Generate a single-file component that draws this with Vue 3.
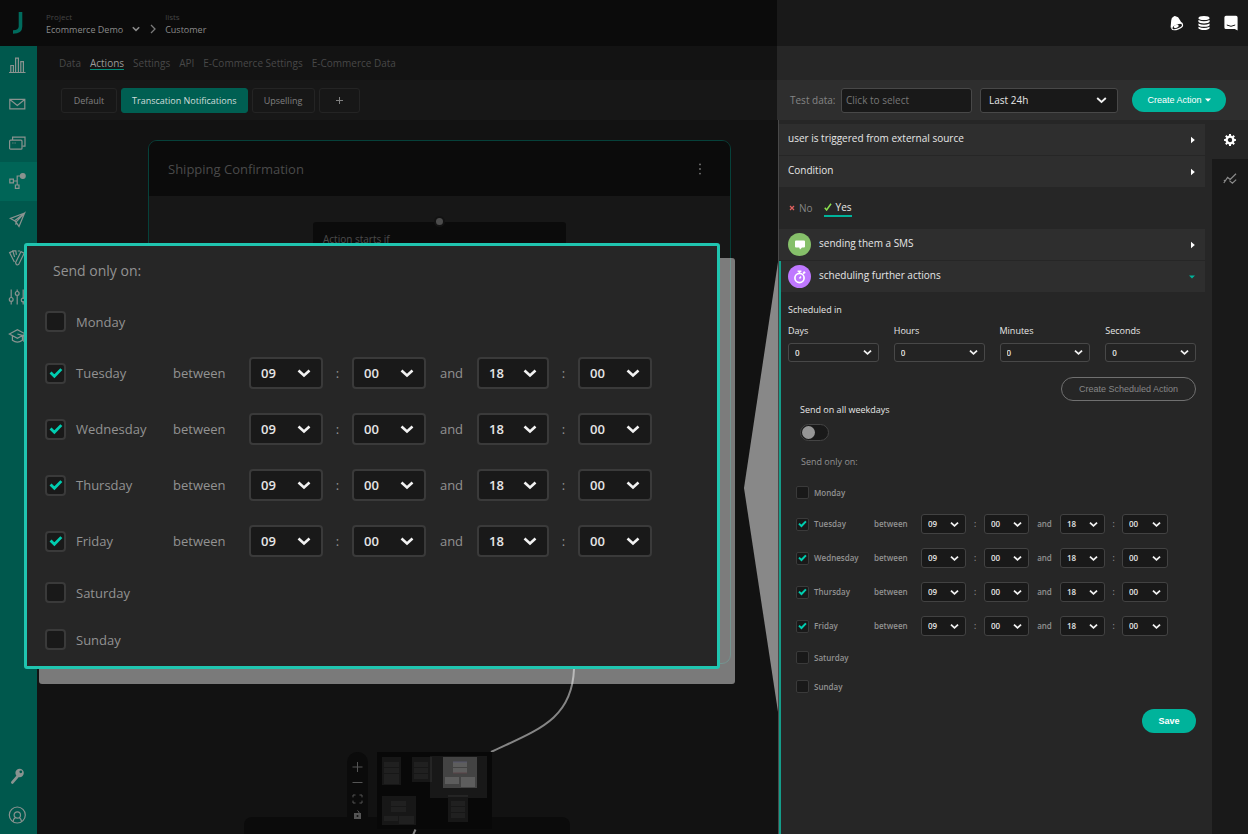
<script setup>
import { reactive, ref } from 'vue'

const navItems = ['stats', 'mail', 'windows', 'flow', 'send', 'swatches', 'sliders', 'learn']
const tabs = ['Data', 'Actions', 'Settings', 'API', 'E-Commerce Settings', 'E-Commerce Data']
const delays = ['Days', 'Hours', 'Minutes', 'Seconds']
const days = reactive([
  { name: 'Monday', on: false },
  { name: 'Tuesday', on: true },
  { name: 'Wednesday', on: true },
  { name: 'Thursday', on: true },
  { name: 'Friday', on: true },
  { name: 'Saturday', on: false },
  { name: 'Sunday', on: false },
])
const slots = [
  { value: '09', after: ':', label: 'from hour' },
  { value: '00', after: 'and', label: 'from minute' },
  { value: '18', after: ':', label: 'to hour' },
  { value: '00', after: '', label: 'to minute' },
]
const allWeekdays = ref(false)
</script>

<template>
  <div class="app">
    <div class="workspace">
      <header class="topbar">
        <a href="#" class="logo" aria-label="Home">
          <svg width="10" height="22" viewBox="0 0 10 22"><path d="M7.5 0v14.5q0 5.5-7.5 5.5" fill="none" stroke="#006b5d" stroke-width="3.6" /></svg>
        </a>
        <div class="crumb">
          <span class="crumb-kind">Project</span>
          <button type="button" class="crumb-name">
            Ecommerce Demo
            <svg width="8" height="6" viewBox="0 0 8 6"><path d="M.8 1.2 4 4.4l3.2-3.2" fill="none" stroke="#8a8a8a" stroke-width="1.6" /></svg>
          </button>
        </div>
        <svg class="crumb-sep" width="6" height="10" viewBox="0 0 6 10"><path d="M1 1l4 4-4 4" fill="none" stroke="#7a7a7a" stroke-width="1.3" /></svg>
        <div class="crumb">
          <span class="crumb-kind">lists</span>
          <a href="#" class="crumb-name">Customer</a>
        </div>
      </header>

      <div class="below">
        <nav class="sidebar">
          <div class="side-main">
            <a v-for="item in navItems" :key="item" href="#" :aria-label="item" :class="['side-link', { current: item === 'flow' }]">
              <svg width="18" height="18" viewBox="0 0 18 18" fill="none" stroke="#8a9390" stroke-width="1.2">
                <template v-if="item === 'stats'"><path d="M1 16.500h16.500M2.800 16V9.500h2.600V16M7.600 16V2.200h2.800V16M12.800 16V5.600h2.600V16" /></template>
                <template v-else-if="item === 'mail'"><path d="M1.800 4.400h15v9.400h-15zM2.200 4.800l7.100 5.600 7.100-5.600" /></template>
                <template v-else-if="item === 'windows'"><rect x="1.600" y="6.200" width="12.400" height="9" rx="1" /><path d="M4.600 6V3.200h12.400v9h-2.600M4.400 9h1M6.600 9h1" /></template>
                <template v-else-if="item === 'flow'"><path d="M1.800 7.200h3.600v3.600H1.800zM7.400 13H11v3.400H7.400zM5.600 9h3.600v4M9.200 9V4h4" /><circle cx="14.800" cy="4" r="2.400" fill="#8a9390" /></template>
                <template v-else-if="item === 'send'"><path d="M16.600 2 2.400 7.400l4.200 2.400L16.600 2 11 15.400 8 11l8.600-9M6.600 9.800 8 11l-.2 2.800" /></template>
                <template v-else-if="item === 'swatches'"><path d="M4.600 2.200 1.600 3.600 6.400 13M6.600 8 4.800 1.800h3l.6 4M7.600 13.600 13 2.600l3.200 1.600-5.400 11q-2.600 1.800-3.200-1.600zM9.800 2h2.200" /></template>
                <template v-else-if="item === 'sliders'"><path d="M3.200 1.400v8M3.200 13.600v3M9.200 1.400v2M9.200 7.400v9.200M15.200 1.400v8.800M15.200 14v2.600" /><circle cx="3.200" cy="11.400" r="1.900" /><circle cx="9.200" cy="5.400" r="1.900" /><circle cx="15.200" cy="12" r="1.900" /></template>
                <template v-else><path d="M1.400 7 9.400 2.800 17.400 7l-8 4.200zM4.400 8.800v4.400q5 3.800 10 0V8.800M9.400 7l6.400 1.800v6" /></template>
              </svg>
            </a>
          </div>
          <a href="#" class="side-link extra" aria-label="Access keys">
            <svg width="18" height="18" viewBox="0 0 18 18"><path d="M4.400 15.400 9.400 9.600" stroke="#8a9390" stroke-width="2.800" stroke-linecap="round" /><circle cx="11.600" cy="6" r="4.200" fill="#8a9390" /><circle cx="12.800" cy="4.800" r="1.400" fill="#00584d" /></svg>
          </a>
          <a href="#" class="side-link extra" aria-label="Account">
            <svg width="18" height="18" viewBox="0 0 18 18" fill="none" stroke="#8a9390" stroke-width="1.200"><circle cx="9.300" cy="9" r="8" /><circle cx="9.300" cy="9" r="3.200" /><path d="M5 15.600q.4-3 2.400-4.200M13.600 15.600q-.4-3-2.400-4.200" /></svg>
          </a>
        </nav>

        <main class="main">
          <nav class="tabs">
            <a v-for="tab in tabs" :key="tab" href="#" :class="['tab', { current: tab === 'Actions' }]">{{ tab }}</a>
          </nav>
          <div class="flows">
            <button type="button" class="flow w-default">Default</button>
            <button type="button" class="flow current">Transcation Notifications</button>
            <button type="button" class="flow w-upsell">Upselling</button>
            <button type="button" class="flow w-add" aria-label="Add">
              <svg width="7" height="7" viewBox="0 0 7 7"><path d="M3.500 0v7M0 3.500h7" stroke="#808080" /></svg>
            </button>
          </div>

          <div class="canvas">
            <section class="group">
              <header class="group-head">
                <h2>Shipping Confirmation</h2>
                <button type="button" class="dots" aria-label="More">
                  <svg width="4" height="12" viewBox="0 0 4 12" fill="#777"><circle cx="2" cy="1.400" r=".9" /><circle cx="2" cy="6" r=".9" /><circle cx="2" cy="10.600" r=".9" /></svg>
                </button>
              </header>
              <div class="node"><span class="handle"></span>Action starts if</div>
            </section>
            <svg class="edge" width="90" height="104" viewBox="0 0 90 104" fill="none" stroke="#858585" stroke-width="2"><path d="M87 0v21C85 72 50 82 4 104" /></svg>
            <div class="next-group"></div>
            <div class="controls">
              <button type="button" aria-label="Zoom in"><svg width="11" height="12" viewBox="0 0 11 12"><path d="M5.500 1v10M.5 6h10" stroke="#555" /></svg></button>
              <button type="button" aria-label="Zoom out"><svg width="11" height="12" viewBox="0 0 11 12"><path d="M.5 5.500h10" stroke="#555" /></svg></button>
              <button type="button" aria-label="Fit view"><svg width="11" height="12" viewBox="0 0 11 12"><path d="M3.500 2H1v2.400M7.500 2H10v2.400M3.500 10H1V7.600M7.500 10H10V7.600" stroke="#555" fill="none" /></svg></button>
              <button type="button" aria-label="Lock"><svg width="11" height="12" viewBox="0 0 11 12"><rect x="2" y="4" width="7" height="6" fill="#555" /><path d="M7 4.400V3L5.500 1.400" stroke="#555" fill="none" /><circle cx="5.500" cy="7" r="1" fill="#111" /></svg></button>
            </div>
            <svg class="minimap" width="115" height="82" viewBox="0 0 115 82">
              <rect width="115" height="77" fill="#080808" />
              <rect x="53" y="4" width="57" height="42" fill="#181818" />
              <g fill="#171717"><path d="M5 5h19v28H5zM35 5h19v25H35zM5 44h34v29H5zM71 44h20v26H71z" /></g>
              <path d="M54 5v25M71 44h20" stroke="#333" />
              <g fill="#202020"><path d="M7 10h15v5H7zM7 16h15v5H7zM7 22h15v10H7zM37 10h14v5H37zM37 16h14v5H37zM37 22h14v5H37zM14 49h15v5H14zM14 55h15v5H14zM7 64h14v5H7zM22 64h15v8H22zM74 49h14v5H74zM74 55h14v5H74zM74 61h14v5H74z" /></g>
              <path d="M66 5h34v31H66z" fill="#434343" />
              <path d="M76 10h14v5H76zM76 16h14v5H76zM68 25h14v7H68zM84 25h14v10H84z" fill="#5d5d5d" />
              <path d="M76 10h14" stroke="#56566c" /><path d="M76 21h14" stroke="#5a4448" />
              <path d="M38.500 77.500 36 83" stroke="#858585" stroke-width="2" />
            </svg>
          </div>
        </main>
      </div>

      <svg class="pointer" width="34" height="450" viewBox="0 0 34 450"><path d="M34 0v450L0 226z" fill="#888" /></svg>

      <section class="callout">
        <p class="days-title">Send only on:</p>
        <div v-for="day in days" :key="day.name" :class="['day', { on: day.on }]">
          <label class="day-label">
            <span class="tick"><input v-model="day.on" type="checkbox"><svg viewBox="0 0 12 10"><path d="M1.300 4.800 4.600 8l6-6.200" fill="none" stroke="#00cdb0" stroke-width="2.400" /></svg></span>
            {{ day.name }}
          </label>
          <template v-if="day.on">
            <span class="between">between</span>
            <template v-for="(slot, i) in slots" :key="i">
              <span class="pick">
                <select :aria-label="day.name + ' ' + slot.label"><option>{{ slot.value }}</option></select>
                <svg viewBox="0 0 14 10"><path d="M1.500 2.500 7 7.500l5.500-5" fill="none" stroke="#f2f2f2" stroke-width="2.600" /></svg>
              </span>
              <span v-if="slot.after" class="joint">{{ slot.after }}</span>
            </template>
          </template>
        </div>
      </section>
    </div>

    <aside class="side">
      <div class="side-top">
        <button type="button" aria-label="Notifications"><svg width="14" height="16" viewBox="0 0 14 16"><path d="M.6 12.400 1.200 5.400Q1.400 2.600 3.400 1.800q1-1.400 2.200-.6 3 .4 4 3.200Q10.600 7 13 8.200L7 13z" fill="#fff" /><ellipse cx="7.200" cy="11.600" rx="5.600" ry="2.500" transform="rotate(-22 7.200 11.600)" fill="#191919" stroke="#fff" stroke-width="1.200" /><ellipse cx="6.200" cy="11.400" rx="2.600" ry="1.500" transform="rotate(-22 6.200 11.400)" fill="#fff" /></svg></button>
        <button type="button" aria-label="Database"><svg width="12" height="16" viewBox="0 0 12 16" fill="#fff"><path d="M.4 3.200Q.6 1 6 1t5.600 2.200Q11.400 5 6 5T.4 3.200zM.4 5q5.600 2.600 11.200 0v1.800Q10.400 8.400 6 8.400T.4 6.800zM.4 8.400q5.600 2.600 11.200 0v1.800q-1.200 1.600-5.600 1.600T.4 10.200zM.4 11.800q5.600 2.600 11.200 0v1.400Q10.400 15 6 15T.4 13.200z" /></svg></button>
        <button type="button" aria-label="Messages"><svg width="14" height="16" viewBox="0 0 14 16"><path d="M2 .8h10q1.600 0 1.600 1.600v13L10.800 14H2Q.4 14 .4 12.400v-10Q.4.800 2 .8z" fill="#fff" /><path d="M2.800 10q4.200 2.600 8.400 0" fill="none" stroke="#191919" /></svg></button>
      </div>
      <div class="side-strip"></div>
      <div class="side-tools">
        <label for="test">Test data:</label>
        <input id="test" type="text" placeholder="Click to select">
        <span class="pick range">
          <select aria-label="Time range"><option>Last 24h</option></select>
          <svg viewBox="0 0 14 10"><path d="M1.500 2.500 7 7.500l5.500-5" fill="none" stroke="#f2f2f2" stroke-width="2.400" /></svg>
        </span>
        <button type="button" class="pill create">Create Action <svg width="6" height="4" viewBox="0 0 6 4"><path d="M0 .5h6L3 3.800z" fill="#fff" /></svg></button>
      </div>

      <div class="side-body">
        <div class="steps">
          <div class="heads first">
            <button type="button" class="head"><span class="head-text">user is triggered from external source</span><svg width="4" height="8" viewBox="0 0 4 8"><path d="M0 .8 3.800 4 0 7.200z" fill="#fff" /></svg></button>
            <button type="button" class="head"><span class="head-text">Condition</span><svg width="4" height="8" viewBox="0 0 4 8"><path d="M0 .8 3.800 4 0 7.200z" fill="#fff" /></svg></button>
          </div>
          <div class="branch">
            <button type="button" class="no"><svg width="6" height="6" viewBox="0 0 6 6"><path d="M1 1l4 4M5 1 1 5" stroke="#e0605e" stroke-width="1.300" /></svg>No</button>
            <button type="button" class="yes"><svg width="8" height="8" viewBox="0 0 8 8"><path d="M.8 4.800 2.600 7 7 .8" fill="none" stroke="#8be04e" stroke-width="1.500" /></svg>Yes</button>
          </div>
          <div class="heads">
            <button type="button" class="head">
              <span class="badge green"><svg width="12" height="10" viewBox="0 0 12 10"><path d="M2 .5h8q1 0 1 1v5q0 1-1 1H8L6 9.600l-.8-2.100H2q-1 0-1-1v-5q0-1 1-1z" fill="#fff" /></svg></span>
              <span class="head-text">sending them a SMS</span><svg width="4" height="8" viewBox="0 0 4 8"><path d="M0 .8 3.800 4 0 7.200z" fill="#fff" /></svg>
            </button>
          </div>
          <section class="schedule">
            <button type="button" class="head">
              <span class="badge purple"><svg width="13" height="14" viewBox="0 0 13 14" fill="none" stroke="#fff"><circle cx="6.500" cy="8" r="4.600" stroke-width="1.700" /><path d="M4.600 1.200h3.800M6.500 1.200v2.400M10 3.600l1.400-1.400M10.600 1.600l1.600 1.600M6.500 8.400 8 6.600" stroke-width="1.500" /></svg></span>
              <span class="head-text">scheduling further actions</span><svg width="6" height="4" viewBox="0 0 6 4"><path d="M0 .4h6L3 3.600z" fill="#00b39b" /></svg>
            </button>
            <div class="form">
              <h3>Scheduled in</h3>
              <div class="delays">
                <label v-for="delay in delays" :key="delay">
                  {{ delay }}
                  <span class="pick">
                    <select><option>0</option></select>
                    <svg viewBox="0 0 14 10"><path d="M1.500 2.500 7 7.500l5.500-5" fill="none" stroke="#f2f2f2" stroke-width="2.800" /></svg>
                  </span>
                </label>
              </div>
              <button type="button" class="pill outline">Create Scheduled Action</button>
              <label class="weekdays">
                Send on all weekdays
                <input v-model="allWeekdays" type="checkbox" role="switch" class="toggle">
              </label>
              <div class="small-days">
                <p class="days-title">Send only on:</p>
                <div v-for="day in days" :key="day.name" :class="['day', { on: day.on }]">
                  <label class="day-label">
                    <span class="tick"><input v-model="day.on" type="checkbox"><svg viewBox="0 0 12 10"><path d="M1.300 4.800 4.600 8l6-6.200" fill="none" stroke="#00cdb0" stroke-width="2.600" /></svg></span>
                    {{ day.name }}
                  </label>
                  <template v-if="day.on">
                    <span class="between">between</span>
                    <template v-for="(slot, i) in slots" :key="i">
                      <span class="pick">
                        <select :aria-label="day.name + ' ' + slot.label"><option>{{ slot.value }}</option></select>
                        <svg viewBox="0 0 14 10"><path d="M1.500 2.500 7 7.500l5.500-5" fill="none" stroke="#f2f2f2" stroke-width="2.800" /></svg>
                      </span>
                      <span v-if="slot.after" class="joint">{{ slot.after }}</span>
                    </template>
                  </template>
                </div>
              </div>
              <button type="button" class="pill save">Save</button>
            </div>
          </section>
        </div>
        <nav class="rail">
          <a href="#" class="rail-link current" aria-label="Settings"><svg width="12" height="12" viewBox="0 0 12 12"><circle cx="6" cy="6" r="3.400" fill="none" stroke="#fff" stroke-width="2.400" /><path d="M6 .1v2M6 9.900v2M.1 6h2M9.900 6h2M1.800 1.800l1.400 1.400M8.800 8.800l1.400 1.400M1.800 10.200l1.400-1.400M8.800 3.200l1.400-1.400" stroke="#fff" stroke-width="2" /></svg></a>
          <a href="#" class="rail-link" aria-label="Analytics"><svg width="14" height="12" viewBox="0 0 14 12" fill="none" stroke="#8c8c8c" stroke-width="1.200"><path d="M.8 10 4.600 4.400l2.600 2L13 .8M.8 7.200l2 .6M6.400 7.600l3 2.600 3.800-3.600" /></svg></a>
        </nav>
      </div>
    </aside>
  </div>
</template>

<style>
body {
  margin: 0;
  background: #121212;
}
</style>

<style scoped>
.app {
  display: grid;
  grid-template-columns: 777fr minmax(440px, 471fr);
  min-height: 100vh;
  font: 500 10px/14px "Open Sans", "Noto Sans", sans-serif;
  color: #e6e6e6;
}
.app *,
.app *::before {
  box-sizing: border-box;
}
a {
  color: inherit;
  text-decoration: none;
}
button {
  margin: 0;
  padding: 0;
  border: 0;
  background: none;
  color: inherit;
  font: inherit;
}
h2, h3, p {
  margin: 0;
  font: inherit;
}
svg {
  display: block;
  flex: none;
}

/* Workspace */
.workspace {
  position: relative;
  display: flex;
  flex-direction: column;
  min-width: 0;
  background: #121212;
}
.topbar {
  display: flex;
  height: 46px;
  padding-top: 11px;
  background: #0b0b0b;
}
.logo {
  width: 46px;
  padding: 1px 0 0 13px;
}
.crumb {
  display: flex;
  flex-direction: column;
  font-size: 9px;
  line-height: 13px;
}
.crumb-kind {
  font-size: 8px;
  line-height: 11px;
  color: #444;
}
.crumb-name {
  display: flex;
  align-items: center;
  gap: 9px;
  height: 14px;
  color: #8a8a8a;
}
.crumb-sep {
  margin: 13px 9px 0 10px;
}
.below {
  display: flex;
  flex: 1;
}
.sidebar {
  display: flex;
  flex-direction: column;
  width: 37px;
  background: #00584d;
}
.side-main {
  display: grid;
  grid-auto-rows: 1fr;
  height: 309px;
  margin-bottom: auto;
}
.side-link {
  display: grid;
  place-items: center;
  padding-right: 3px;
}
.side-link.current {
  background: #006557;
}
.extra {
  height: 39px;
}
.main {
  display: flex;
  flex: 1;
  flex-direction: column;
  min-width: 0;
}
.tabs {
  display: flex;
  gap: 9px;
  height: 34px;
  padding: 10px 0 0 22px;
  background: #131313;
  color: #484848;
}
.tab {
  height: 14px;
}
.tab.current {
  border-bottom: 1px solid #008a77;
  color: #999;
}
.flows {
  display: flex;
  gap: 4px;
  height: 40px;
  padding: 8px 0 0 24px;
  background: #171717;
  font-size: 9px;
}
.flow {
  display: grid;
  place-items: center;
  height: 25px;
  padding: 0 10px;
  border: 1px solid #242424;
  border-radius: 3px;
  color: #808080;
}
.flow.current {
  border-color: #005f52;
  background: #005f52;
  color: #d0dedb;
}
.w-default {
  width: 56px;
}
.w-upsell {
  width: 63px;
}
.w-add {
  width: 41px;
}
.canvas {
  position: relative;
  flex: 1;
  min-height: 714px;
}
.group {
  position: absolute;
  top: 20px;
  right: 46px;
  left: 111px;
  height: 524px;
  overflow: hidden;
  border: 1px solid #06413a;
  border-radius: 9px;
  background: #171717;
}
.group-head {
  display: flex;
  align-items: center;
  justify-content: space-between;
  height: 55px;
  padding: 0 28px 0 19px;
  background: #0b0b0b;
  color: #4a4a4a;
}
.group-head h2 {
  font-size: 13px;
  line-height: 20px;
}
.node {
  position: absolute;
  top: 81px;
  left: 164px;
  width: 253px;
  height: 90px;
  padding: 10px;
  border-radius: 3px;
  background: #0b0b0b;
  color: #4c4c4c;
}
.handle {
  position: absolute;
  top: -6px;
  left: 121px;
  width: 11px;
  height: 11px;
  border: 2px solid #131313;
  border-radius: 50%;
  background: #4c4c4c;
}
.edge {
  position: absolute;
  top: 528px;
  left: 450px;
}
.next-group {
  position: absolute;
  bottom: 0;
  left: 207px;
  width: 326px;
  height: 17px;
  border-radius: 8px 8px 0 0;
  background: #0b0b0b;
}
.controls {
  position: absolute;
  bottom: 8px;
  left: 310px;
  display: flex;
  flex-direction: column;
  gap: 4px;
  align-items: center;
  width: 21px;
  height: 74px;
  padding-top: 9px;
  border-radius: 10px 10px 0 0;
  background: #0b0b0b;
}
.minimap {
  position: absolute;
  bottom: 0;
  left: 340px;
}
.pointer {
  position: absolute;
  top: 262px;
  right: -1px;
}

/* Weekday rows */
.callout {
  position: absolute;
  top: 243px;
  right: 57px;
  left: 24px;
  padding: 15px 0 3px 18px;
  border: 3px solid #20c5b0;
  border-radius: 3px;
  background: #262626;
  box-shadow: 15px 15px 0 rgba(255, 255, 255, 0.44);
  font-size: 13px;
  line-height: 18px;
  color: #929292;
}
.callout .days-title {
  margin: 0 0 17px 8px;
  font-size: 14px;
  font-weight: 400;
  line-height: 20px;
}
.day {
  display: grid;
  align-items: center;
  grid-template-columns: 128px 76px 74px 29px 74px 51px 72px 29px 74px;
  height: 47px;
}
.day.on {
  height: 56px;
}
.day-label {
  display: flex;
  align-items: center;
  gap: 10px;
}
.joint {
  text-align: center;
}
.tick,
.pick {
  display: grid;
  align-items: center;
}
.tick > *,
.pick > * {
  grid-area: 1 / 1;
}
.tick {
  justify-items: center;
}
.tick input {
  appearance: none;
  width: 21px;
  height: 21px;
  margin: 0;
  border: 2px solid #3a3a3a;
  border-radius: 4px;
  background: #191919;
}
.tick svg {
  width: 14px;
  visibility: hidden;
  pointer-events: none;
}
.tick input:checked + svg {
  visibility: visible;
}
.pick select {
  appearance: none;
  width: 100%;
  height: 32px;
  margin: 0;
  padding: 0 0 0 10px;
  border: 2px solid #3a3a3a;
  border-radius: 4px;
  background: #191919;
  color: #e6e6e6;
  font: inherit;
  font-weight: 600;
}
.pick svg {
  width: 14px;
  margin-right: 12px;
  justify-self: end;
  pointer-events: none;
}

/* Side panel */
.side {
  display: flex;
  flex-direction: column;
  min-width: 0;
  background: #262626;
}
.side-top {
  display: flex;
  align-items: center;
  justify-content: flex-end;
  gap: 14px;
  height: 46px;
  padding-right: 10px;
  background: #191919;
}
.side-strip {
  height: 34px;
}
.side-tools {
  display: flex;
  align-items: center;
  height: 40px;
  padding: 0 22px 0 13px;
  background: #2e2e2e;
}
.side-tools label {
  width: 51px;
  color: #858585;
  white-space: nowrap;
}
.side-tools input,
.range select {
  height: 25px;
  border: 1px solid #484848;
  border-radius: 3px;
  background: #191919;
  color: #e6e6e6;
  font: inherit;
}
.side-tools input {
  flex: 1;
  min-width: 0;
  padding: 0 4px;
}
.side-tools input::placeholder {
  color: #777;
  opacity: 1;
}
.range {
  width: 138px;
  margin: 0 14px 0 8px;
}
.range select {
  padding-left: 8px;
}
.range svg {
  width: 11px;
  margin-right: 11px;
}
.pill {
  display: flex;
  align-items: center;
  justify-content: center;
  gap: 3px;
  height: 24px;
  border-radius: 12px;
  background: #00b39b;
  color: #fff;
  font: 9px/12px "Liberation Sans", Arial, sans-serif;
}
.create {
  width: 94px;
}
.side-body {
  display: flex;
  flex: 1;
  border-left: 1px solid #121212;
}
.steps {
  display: flex;
  flex: 1;
  flex-direction: column;
  min-width: 0;
  border-left: 1px solid #484848;
}
.heads {
  display: grid;
  gap: 1px;
  margin-bottom: 1px;
}
.heads.first {
  margin-top: 4px;
}
.head {
  display: flex;
  align-items: center;
  width: calc(100% - 7px);
  height: 31px;
  padding: 0 10px 0 9px;
  background: #2e2e2e;
  text-align: left;
}
.head-text {
  padding-bottom: 3px;
}
.head > svg {
  margin-left: auto;
}
.badge {
  display: grid;
  place-items: center;
  width: 23px;
  height: 23px;
  margin-right: 8px;
  border-radius: 50%;
}
.green {
  background: #86c06a;
}
.purple {
  background: #bf78ff;
}
.branch {
  display: flex;
  gap: 11px;
  height: 41px;
  padding: 12px 0 0 10px;
}
.branch button {
  display: flex;
  align-items: center;
  gap: 4px;
  height: 17px;
  padding-bottom: 2px;
}
.no {
  color: #858585;
}
.branch .yes {
  padding-bottom: 1px;
  border-bottom: 2px solid #00b39b;
}
.schedule {
  flex: 1;
  border-left: 2px solid #149c89;
}
.schedule .head {
  padding-left: 7px;
}
.form {
  display: flex;
  flex-direction: column;
  padding: 11px 16px 24px 7px;
  font-size: 9px;
}
.delays {
  display: grid;
  grid-template-columns: repeat(4, 1fr);
  gap: 15px;
  margin-top: 7px;
}
.delays .pick {
  margin-top: 5px;
}
.delays select {
  height: 19px;
  padding-left: 6px;
  border-width: 1px;
  border-radius: 3px;
  border-color: #484848;
  background: #232323;
  font-size: 8px;
}
.delays svg,
.small-days .pick svg {
  width: 9px;
  margin-right: 7px;
}
.outline {
  width: 135px;
  margin: 15px 0 2px;
  align-self: flex-end;
  border: 1px solid #707070;
  background: none;
  color: #868686;
}
.weekdays {
  display: grid;
  gap: 7px;
  padding-left: 12px;
  justify-items: start;
}
.toggle {
  appearance: none;
  width: 29px;
  height: 17px;
  margin: 0;
  border: 1px solid #444;
  border-radius: 9px;
  background: #191919;
}
.toggle::before {
  content: "";
  display: block;
  width: 13px;
  height: 13px;
  margin: 1px;
  border-radius: 50%;
  background: #969696;
}
.toggle:checked::before {
  margin-left: 13px;
  background: #00b39b;
}
.small-days {
  padding: 14px 0 0 8px;
  color: #929292;
  font-size: 8px;
  font-weight: 600;
  line-height: 12px;
}
.small-days .days-title {
  margin: 0 0 9px 5px;
  font-size: 9px;
  font-weight: 400;
  line-height: 14px;
}
.small-days .day {
  grid-template-columns: 78px 47px 45px 18px 45px 31px 45px 17px 46px;
  height: 29px;
}
.small-days .day.on {
  height: 34px;
}
.small-days .day-label {
  gap: 5px;
}
.small-days input {
  width: 13px;
  height: 13px;
  border-width: 1px;
  border-radius: 2px;
}
.small-days .tick svg {
  width: 9px;
}
.small-days select {
  height: 20px;
  padding-left: 6px;
  border-width: 1px;
  border-color: #424242;
  border-radius: 3px;
}
.save {
  width: 54px;
  margin-top: 8px;
  align-self: flex-end;
  font-weight: 700;
}
.rail {
  width: 36px;
  background: #191919;
}
.rail-link {
  display: grid;
  place-items: center;
  height: 39px;
}
.rail-link.current {
  background: #262626;
}
</style>
